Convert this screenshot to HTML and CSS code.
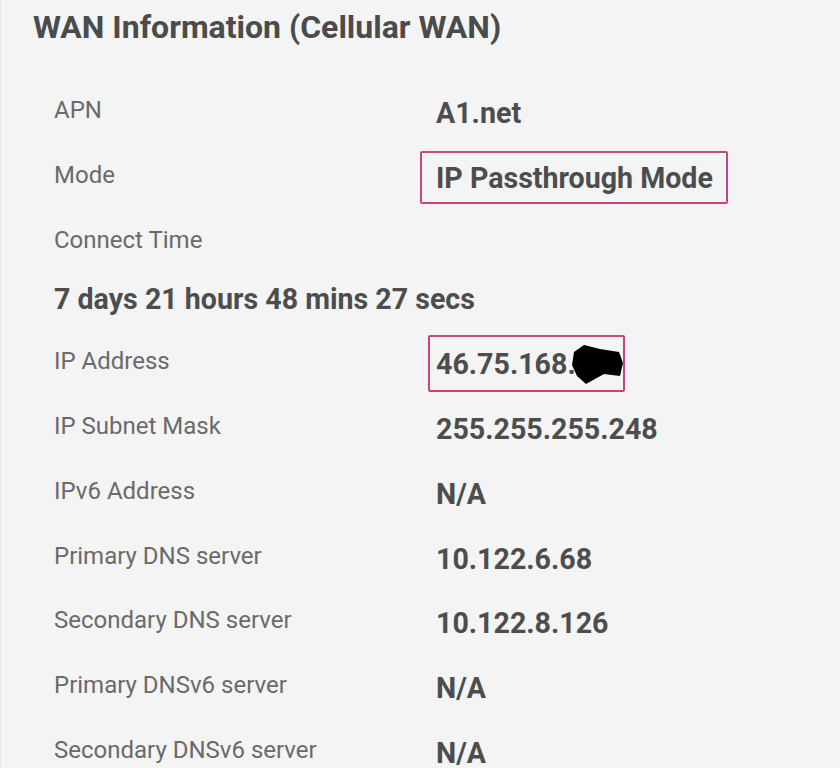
FILE: index.html
```html
<!DOCTYPE html>
<html lang="en">
<head>
  <meta charset="UTF-8">
  <meta name="viewport" content="width=device-width, initial-scale=1.0">
  <title>WAN Information</title>
  <link rel="stylesheet" href="styles.css">
</head>
<body>

<div class="card">
  <h2 class="title">WAN Information (Cellular WAN)</h2>

  <div class="info">
    <div class="label">APN</div>
    <div class="value">A1.net</div>

    <div class="label">Mode</div>
    <div class="value"><span class="mark mark-mode">IP Passthrough Mode</span></div>

    <div class="label">Connect Time</div>
    <div class="value"></div>
    <div class="value full">7 days 21 hours 48 mins 27 secs</div>

    <div class="label">IP Address</div>
    <div class="value">
      <span class="mark mark-ip">46.75.168.<svg class="scribble" width="56" height="44" viewBox="0 0 56 44"><polygon points="4,9 14,2 30,6 49,9 53,20 50,33 34,31 16,41 7,33 2,22" fill="#000"/></svg></span>
    </div>

    <div class="label">IP Subnet Mask</div>
    <div class="value">255.255.255.248</div>

    <div class="label">IPv6 Address</div>
    <div class="value">N/A</div>

    <div class="label">Primary DNS server</div>
    <div class="value">10.122.6.68</div>

    <div class="label">Secondary DNS server</div>
    <div class="value">10.122.8.126</div>

    <div class="label">Primary DNSv6 server</div>
    <div class="value">N/A</div>

    <div class="label">Secondary DNSv6 server</div>
    <div class="value">N/A</div>
  </div>
</div>

</body>
</html>
```

FILE: styles.css
```css
body {
  margin: 0;
  background: #f4f4f4;
  font-family: Roboto, "Liberation Sans", sans-serif;
}
.card {
  border-left: 1px solid #e9e9e9;
  min-height: 768px;
  box-sizing: border-box;
  padding: 8px 0 0 32px;
}
.title {
  margin: 0;
  font-size: 32px;
  font-weight: 700;
  color: #4b4b4b;
}
.info {
  display: grid;
  grid-template-columns: 382px 1fr;
  row-gap: 30.8px;
  margin-top: 50px;
  padding-left: 21px;
}
.label {
  font-size: 24px;
  color: #6a6a6a;
}
.value {
  font-size: 28.6px;
  font-weight: 700;
  color: #4d4d4d;
}
.value.full {
  grid-column: 1 / -1;
  margin-top: -2px;
}
.mark {
  position: relative;
  display: inline-block;
}
.mark::after {
  content: "";
  position: absolute;
  border: 2px solid #c4477c;
  border-radius: 2px;
}
.mark-mode::after {
  left: -16px;
  top: -10px;
  right: -15px;
  bottom: -9px;
}
.mark-ip {
  width: 181px;
}
.mark-ip::after {
  left: -8px;
  top: -12px;
  right: -8px;
  bottom: -11px;
}
.scribble {
  position: absolute;
  left: 134px;
  top: -4px;
}
```
